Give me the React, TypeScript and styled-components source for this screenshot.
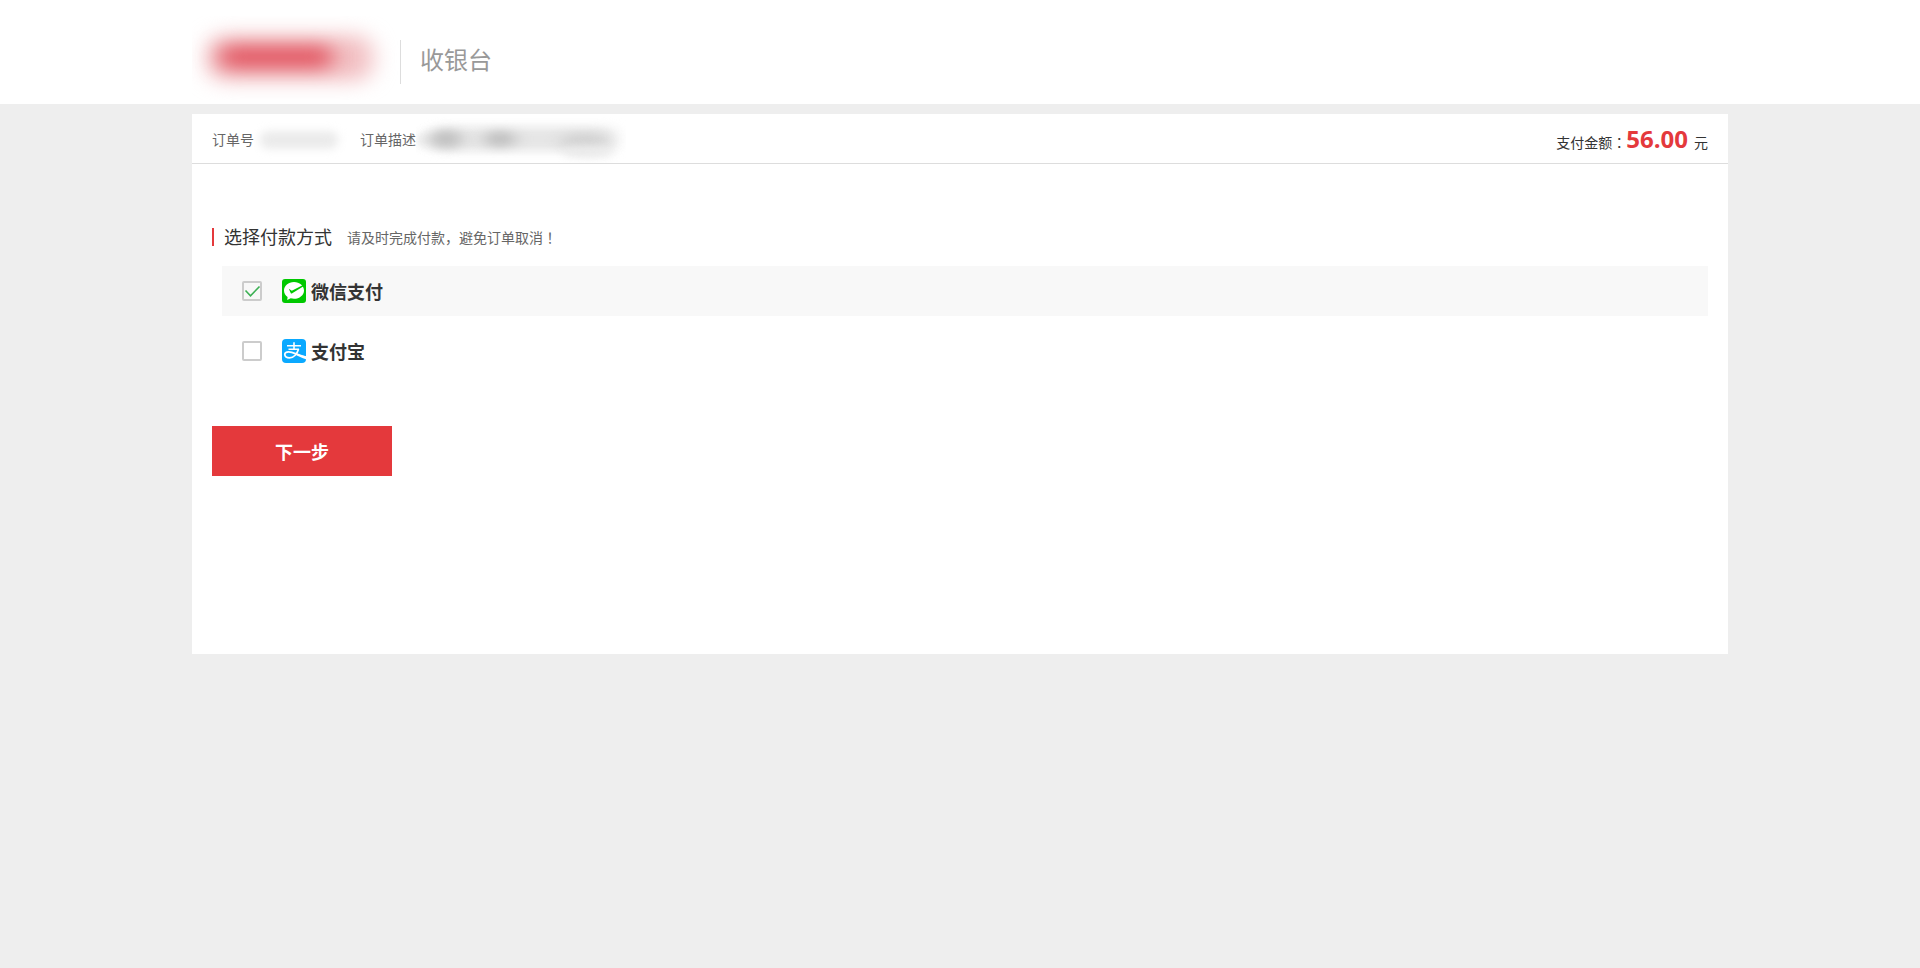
import React, { useState } from 'react';
import styled, { createGlobalStyle } from 'styled-components';

const GlobalStyle = createGlobalStyle`
  * { box-sizing: border-box; }
  body {
    margin: 0;
    background: #eee;
    color: #333;
    font-family: 'Open Sans', 'Noto Sans CJK SC', sans-serif;
    font-size: 14px;
    line-height: 20px;
  }
`;

const Header = styled.header`
  background: #fff;
`;

const HeaderInner = styled.div`
  display: flex;
  align-items: center;
  width: 80%;
  height: 104px;
  margin: 0 auto;
  padding-top: 20px;
`;

const Logo = styled.svg`
  display: block;
  flex: none;
  width: 208px;
  height: 84px;
  margin-top: -8px;
`;

const HeaderTitle = styled.h1`
  margin: 0;
  padding: 4px 0 8px 19px;
  border-left: 1px solid #ddd;
  color: #999;
  font-size: 24px;
  font-weight: 400;
  line-height: 32px;
`;

const Card = styled.main`
  width: 80%;
  min-height: 540px;
  margin: 10px auto 0;
  background: #fff;
`;

const OrderBar = styled.div`
  display: flex;
  align-items: center;
  justify-content: space-between;
  height: 50px;
  padding: 2px 20px 0;
  border-bottom: 1px solid #ddd;
`;

const OrderInfo = styled.div`
  display: flex;
  align-items: center;
  color: #666;
`;

const Masked = styled.svg<{ $width: number }>`
  display: block;
  flex: none;
  width: ${(p) => p.$width}px;
  height: 46px;
`;

const Amount = styled.div`
  display: flex;
  align-items: baseline;
  padding-top: 2px;
  line-height: 32px;
`;

const Price = styled.strong`
  margin-right: 6px;
  color: #e4393c;
  font-size: 24px;
  font-weight: 700;
`;

const Centered = styled.span`
  font-family: 'Noto Sans CJK TC', sans-serif;
`;

const Payment = styled.form`
  padding: 61px 20px 0;
`;

const SectionHead = styled.div`
  display: flex;
  align-items: center;
  height: 24px;
`;

const SectionTitle = styled.h2`
  margin: 0;
  padding-left: 10px;
  border-left: 2px solid #e4393c;
  font-size: 18px;
  font-weight: 400;
  line-height: 18px;
`;

const Tip = styled.p`
  margin: 0 0 0 15px;
  color: #666;
`;

const Options = styled.div`
  display: flex;
  flex-direction: column;
  gap: 10px;
  margin: 17px 0 50px 10px;
`;

const Option = styled.label<{ $active: boolean }>`
  display: flex;
  align-items: center;
  height: 50px;
  padding: 0 20px;
  background: ${(p) => (p.$active ? '#f8f8f8' : '#fff')};
  font-size: 18px;
  font-weight: 700;
  cursor: pointer;
`;

const Check = styled.input`
  appearance: none;
  flex: none;
  width: 20px;
  height: 20px;
  margin: 0 20px 0 0;
  border: 2px solid #ccc;
  border-radius: 2px;
  background: transparent;
  cursor: pointer;
`;

const CheckCell = styled.span`
  display: grid;
  flex: none;

  > * {
    grid-area: 1 / 1;
  }
`;

const Tick = styled.svg`
  width: 20px;
  height: 20px;
  pointer-events: none;
`;

const PayIcon = styled.svg`
  display: block;
  flex: none;
  width: 24px;
  height: 24px;
`;

const OptionName = styled.span`
  padding: 2px 0 0 5px;
  line-height: 24px;
`;

const NextButton = styled.button`
  display: block;
  width: 180px;
  height: 50px;
  padding: 2px 0 0;
  border: 0;
  background: #e4393c;
  color: #fff;
  font: inherit;
  font-size: 18px;
  font-weight: 700;
  cursor: pointer;
`;

function WechatIcon() {
  return (
    <PayIcon viewBox="0 0 24 24" aria-hidden="true">
      <rect width="24" height="24" rx="3" fill="#00c800" />
      <path
        d="M12 3C6.400 3 2 6.700 2 11.500c0 2.700 1.400 5 3.600 6.500L5.200 21l3.500-1.700c1 .3 2.200.5 3.300.5 5.600 0 10-3.700 10-8.300S17.600 3 12 3z"
        fill="#fff"
      />
      <path d="M6.800 9.800l3 1.900L22 5.600v1.500L10.200 14.200c-.8.500-1.200.3-1.500-.3z" fill="#00c800" />
    </PayIcon>
  );
}

function AlipayIcon() {
  return (
    <PayIcon viewBox="0 0 24 24" aria-hidden="true">
      <rect width="24" height="24" rx="4" fill="#0aa9ff" />
      <path d="M5 6.800h14M12 3.200v7M6.500 10.300h10.500" fill="none" stroke="#fff" strokeWidth="1.600" />
      <path
        d="M16.500 10.300c-1.300 4.200-4.600 8.500-9 8.500-2.800 0-4.700-1.200-4.700-3.200 0-1.700 1.700-2.800 3.900-2.800 3.500 0 8 2.600 17.300 5.400"
        fill="none"
        stroke="#fff"
        strokeWidth="1.800"
      />
      <path d="M13.500 14.400c3.200 1.100 6.500 2.100 10.500 2.900v3c-4-1.200-8-3-11-4.700z" fill="#fff" />
    </PayIcon>
  );
}

const methods = [
  { id: 'wechat', name: '微信支付', Icon: WechatIcon },
  { id: 'alipay', name: '支付宝', Icon: AlipayIcon },
];

export default function App() {
  const [selected, setSelected] = useState('wechat');

  return (
    <>
      <GlobalStyle />
      <Header>
        <HeaderInner>
          <Logo viewBox="0 0 208 84" aria-hidden="true">
            <defs>
              <filter
                id="logoSoft"
                x="-30%"
                y="-80%"
                width="160%"
                height="260%"
                colorInterpolationFilters="sRGB"
              >
                <feGaussianBlur stdDeviation="11 10" />
              </filter>
              <filter
                id="logoCore"
                x="-50%"
                y="-200%"
                width="200%"
                height="500%"
                colorInterpolationFilters="sRGB"
              >
                <feGaussianBlur stdDeviation="11 9" />
              </filter>
            </defs>
            <rect x="15" y="19" width="166" height="46" rx="18" fill="#f2c0c3" filter="url(#logoSoft)" />
            <rect x="28" y="30" width="112" height="22" rx="8" fill="#e25561" filter="url(#logoCore)" />
          </Logo>
          <HeaderTitle>收银台</HeaderTitle>
        </HeaderInner>
      </Header>
      <Card>
        <OrderBar>
          <OrderInfo>
            <span>订单号</span>
            <Masked $width={106} viewBox="0 0 106 46" aria-hidden="true">
              <defs>
                <filter
                  id="maskSoft"
                  x="-30%"
                  y="-150%"
                  width="160%"
                  height="400%"
                  colorInterpolationFilters="sRGB"
                >
                  <feGaussianBlur stdDeviation="5 4" />
                </filter>
              </defs>
              <rect x="6" y="14" width="78" height="18" rx="8" fill="#ebebeb" filter="url(#maskSoft)" />
            </Masked>
            <span>订单描述</span>
            <Masked $width={210} viewBox="0 0 210 46" aria-hidden="true">
              <defs>
                <filter
                  id="maskDark"
                  x="-60%"
                  y="-150%"
                  width="220%"
                  height="400%"
                  colorInterpolationFilters="sRGB"
                >
                  <feGaussianBlur stdDeviation="8 5" />
                </filter>
              </defs>
              <rect x="0" y="16" width="40" height="14" rx="6" fill="#eee" filter="url(#maskSoft)" />
              <rect x="16" y="10" width="184" height="24" rx="10" fill="#e6e6e6" filter="url(#maskDark)" />
              <ellipse cx="30" cy="22" rx="16" ry="9" fill="#c0c0c0" filter="url(#maskDark)" />
              <ellipse cx="84" cy="22" rx="16" ry="8" fill="#c0c0c0" filter="url(#maskDark)" />
              <ellipse cx="168" cy="24" rx="24" ry="8" fill="#d2d2d2" filter="url(#maskDark)" />
              <ellipse cx="172" cy="35" rx="26" ry="6" fill="#ebebeb" filter="url(#maskSoft)" />
            </Masked>
          </OrderInfo>
          <Amount>
            <span>支付金额<Centered>{'\uFF1A'}</Centered></span>
            <Price>56.00</Price>
            <span>元</span>
          </Amount>
        </OrderBar>
        <Payment onSubmit={(e) => e.preventDefault()}>
          <SectionHead>
            <SectionTitle>选择付款方式</SectionTitle>
            <Tip>
              请及时完成付款{'\uFF0C'}避免订单取消<Centered>{'\uFF01'}</Centered>
            </Tip>
          </SectionHead>
          <Options>
            {methods.map(({ id, name, Icon }) => (
              <Option key={id} htmlFor={id} $active={selected === id}>
                <CheckCell>
                  <Check
                    type="checkbox"
                    id={id}
                    checked={selected === id}
                    onChange={() => setSelected(id)}
                  />
                  {selected === id && (
                    <Tick viewBox="0 0 20 20" aria-hidden="true">
                      <path d="M3.500 9.500l5 5.300L17.500 5.500" fill="none" stroke="#3cb054" strokeWidth="1.600" />
                    </Tick>
                  )}
                </CheckCell>
                <Icon />
                <OptionName>{name}</OptionName>
              </Option>
            ))}
          </Options>
          <NextButton type="submit">下一步</NextButton>
        </Payment>
      </Card>
    </>
  );
}
